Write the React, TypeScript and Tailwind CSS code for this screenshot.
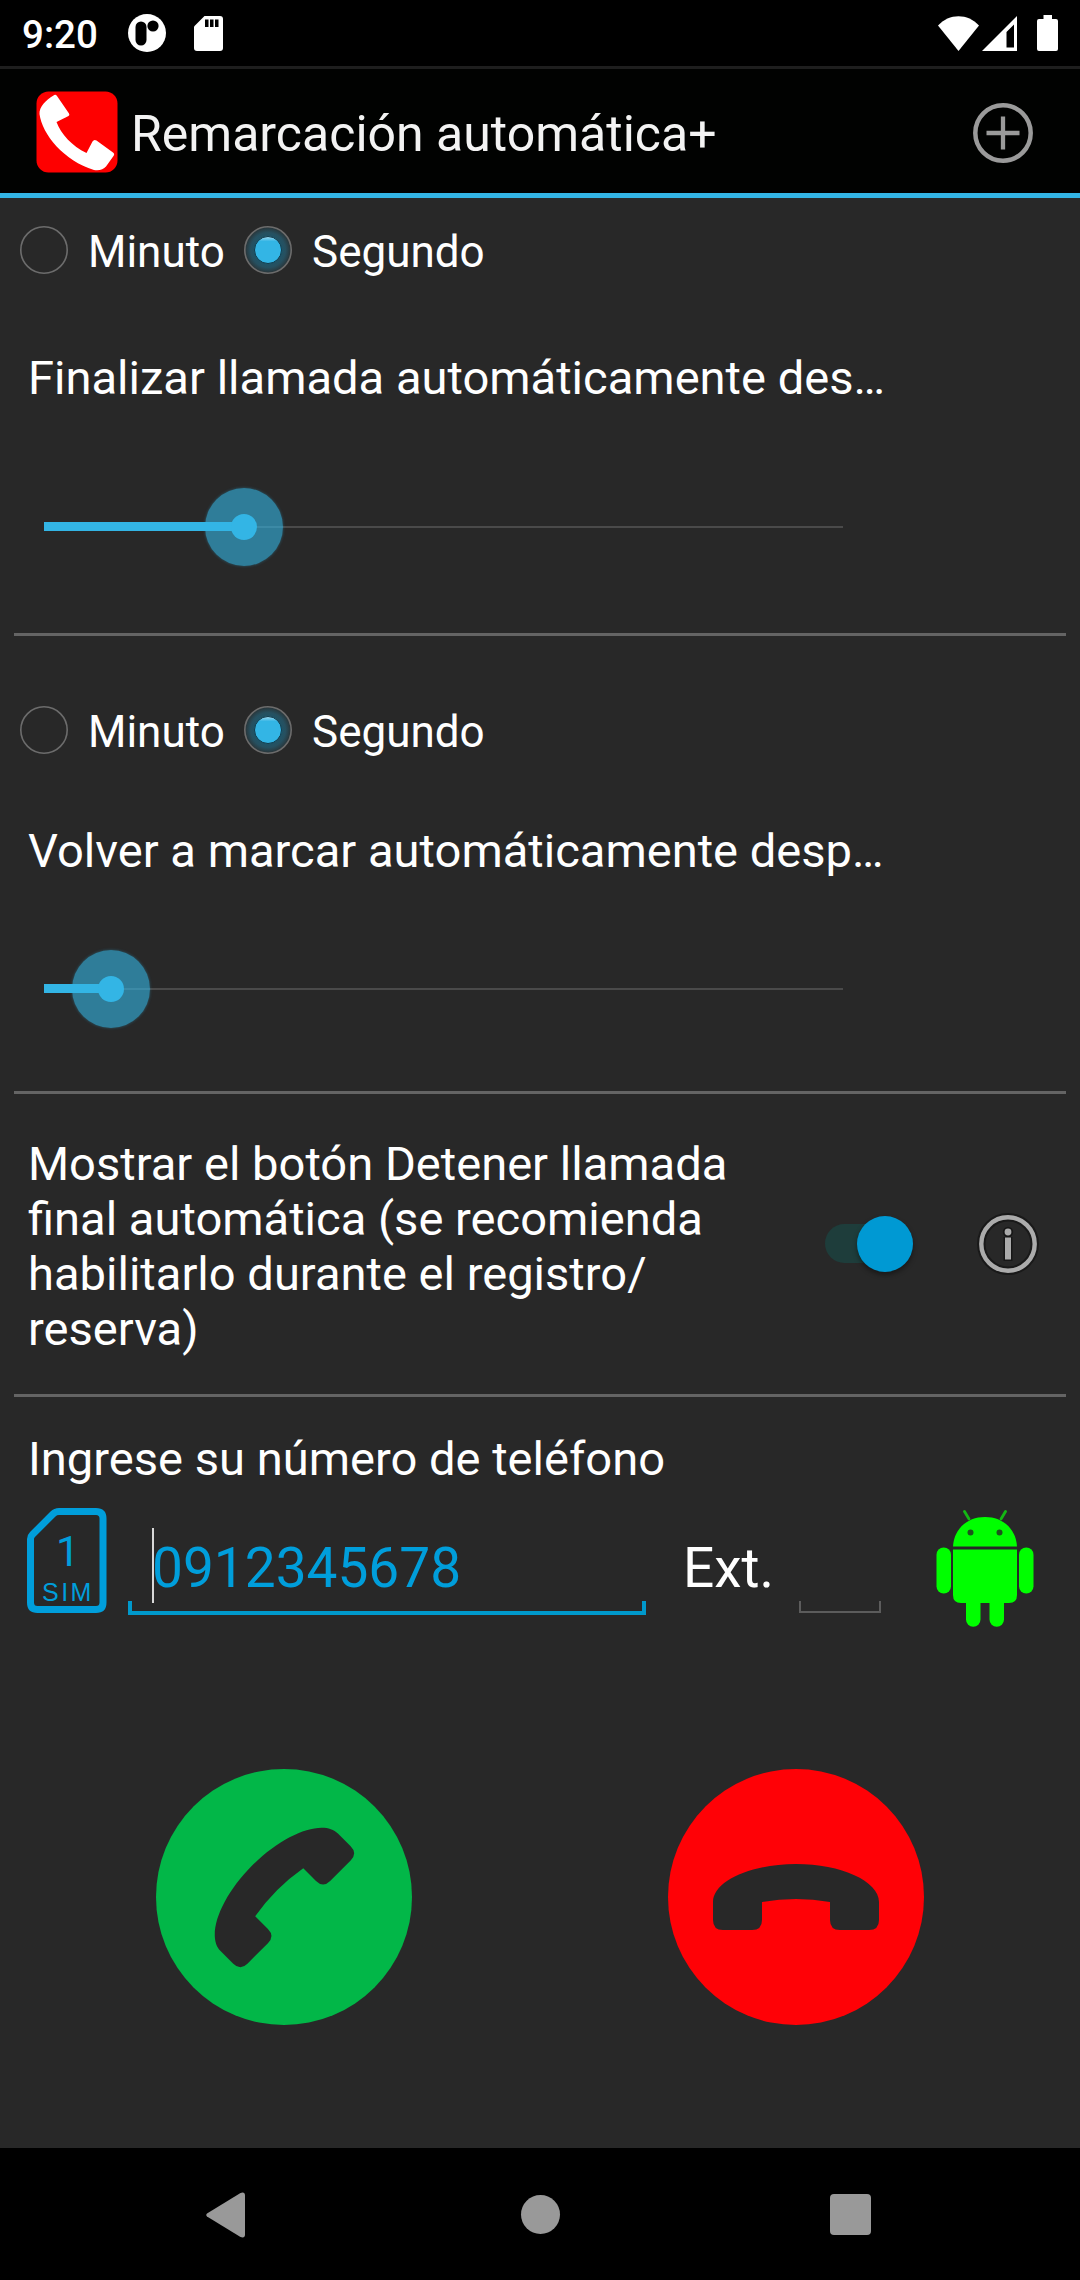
import React from "react";

function StatusBar() {
  return (
    <div className="flex h-[66px] shrink-0 items-center bg-black pl-[22px] pr-[22px]">
      <span className="mt-[3px] w-[106px] text-[38.5px] font-medium leading-[44px] text-white">9:20</span>
      <svg width="38" height="38" viewBox="0 0 38 38" className="block">
        <circle cx="19" cy="19" r="19" fill="#fff" />
        <rect x="7.5" y="7.5" width="11" height="24" rx="5.5" fill="#000" />
        <circle cx="25" cy="12" r="5.6" fill="#000" />
      </svg>
      <svg width="29" height="35" viewBox="0 0 29 35" className="ml-[28px] block">
        <path d="M10.5 0H26a3 3 0 0 1 3 3V32a3 3 0 0 1-3 3H3a3 3 0 0 1-3-3V10.500Z" fill="#fff" />
        <path d="M11 3.500h3.500V11H11ZM16 3.500h3.500V11H16ZM21 3.500h3.500V11H21Z" fill="#000" />
      </svg>
      <div className="flex-1" />
      <svg width="41" height="35" viewBox="0 0 41 35" className="block">
        <path d="M0 9.500C11-3 30-3 41 9.500L20.500 35Z" fill="#fff" />
      </svg>
      <svg width="35" height="35" viewBox="0 0 35 35" className="ml-[3px] block">
        <path d="M35 0V35H0ZM32 8.500L24.500 16V31.500H32Z" fill="#fff" fillRule="evenodd" />
      </svg>
      <svg width="21" height="36" viewBox="0 0 21 36" className="ml-[20px] block">
        <path d="M6.500 0h8.500v4H19a2 2 0 0 1 2 2V34a2 2 0 0 1-2 2H2a2 2 0 0 1-2-2V6a2 2 0 0 1 2-2H6.500Z" fill="#fff" />
      </svg>
    </div>
  );
}

function TitleBar() {
  return (
    <header className="flex h-[132px] shrink-0 items-center border-b-[5px] border-t-[3px] border-b-[#33b5e5] border-t-[#1e1e1e] bg-[#010201] pl-[36px] pr-[46px]">
      <svg width="82" height="82" viewBox="0 0 82 82" className="mt-[2px] block">
        <rect x="0.500" y="0.500" width="81" height="81" rx="12" fill="#fe0000" />
        <path
          d="M17.500 4.500Q19.500 3 21 5L33 22.500Q34 24 32.500 25L20.500 31C25 43 36 55 50.500 62L56.500 50.500Q58 48 60.500 49.500L77 61.500Q79 63 77.500 65L70 75.500C67.500 78.500 63 80 58 79C28 70 6 43 3.500 23C3 16 10 9 17.500 4.500Z"
          fill="#fff"
        />
      </svg>
      <h1 className="ml-[13px] mt-[6px] flex-1 text-[50px] font-normal leading-[58px] text-[#f3f3f3]">Remarcación automática+</h1>
      <svg width="62" height="62" viewBox="0 0 62 62" className="mt-[3px] block">
        <circle cx="31" cy="31" r="27.700" fill="none" stroke="#9a9a9a" strokeWidth="4.500" />
        <path d="M31 14.500V47.500M14.500 31H47.500" stroke="#9a9a9a" strokeWidth="4.300" />
      </svg>
    </header>
  );
}

function Radio({ checked }: { checked?: boolean }) {
  return (
    <svg width="50" height="50" viewBox="0 0 50 50" className="block">
      <defs>
        <radialGradient id="glow">
          <stop offset="0.5" stopColor="#1d5569" />
          <stop offset="0.75" stopColor="#265060" />
          <stop offset="1" stopColor="#2a3336" />
        </radialGradient>
        <linearGradient id="shine" x1="0" y1="0" x2="0" y2="1">
          <stop offset="0" stopColor="#a5dcf2" />
          <stop offset="0.18" stopColor="#33b5e5" />
        </linearGradient>
      </defs>
      <circle cx="25" cy="25" r="23.200" fill={checked ? "url(#glow)" : "none"} stroke="#6c6c6c" strokeWidth="1.600" />
      {checked && <circle cx="25" cy="25" r="13.500" fill="url(#shine)" stroke="#123a4a" strokeWidth="1" />}
    </svg>
  );
}

function UnitPicker() {
  return (
    <div className="flex h-[60px] items-center pl-[19px] text-[44px] leading-[52px] text-white">
      <Radio />
      <span className="ml-[19px] mt-[4px] w-[155px]">Minuto</span>
      <Radio checked />
      <span className="ml-[19px] mt-[4px]">Segundo</span>
    </div>
  );
}

function Slider({ value }: { value: number }) {
  return (
    <div className="relative ml-[44px] flex h-[80px] w-[799px] items-center">
      <div className="h-[2px] w-full bg-[#4a4a4a]" />
      <div className="absolute top-0 mt-[1px] size-[78px] -translate-x-1/2 rounded-full bg-[#33b5e5]/60 shadow-[0_0_3px_#33b5e560]" style={{ left: value }} />
      <div className="absolute left-0 top-[35px] h-[9px] bg-[#33b5e5]" style={{ width: value }} />
      <div className="absolute top-[27px] size-[26px] -translate-x-1/2 rounded-full bg-[#33b5e5]" style={{ left: value }} />
    </div>
  );
}

function Divider() {
  return <div className="mx-[14px] h-[3px] shrink-0 bg-[#646464]" />;
}

function StopButtonSetting() {
  return (
    <section className="flex h-[300px] shrink-0 items-center">
      <p className="ml-[28px] mt-[3px] w-[797px] text-[47.1px] leading-[55px] text-white">
        Mostrar el botón Detener llamada
        <br />
        final automática (se recomienda
        <br />
        habilitarlo durante el registro/
        <br />
        reserva)
      </p>
      <div className="relative -mt-[2px] h-[39px] w-[80px] rounded-full bg-[#1e3d3b]">
        <div className="absolute -top-[8px] left-[32px] size-[56px] rounded-full bg-[#0099d3] shadow-[0_3px_5px_rgba(0,0,0,0.4)]" />
      </div>
      <svg width="66" height="66" viewBox="0 0 66 66" className="ml-[70px] block">
        <circle cx="33" cy="33" r="26.700" fill="none" stroke="#191919" strokeWidth="8.500" />
        <circle cx="33" cy="33" r="26.700" fill="none" stroke="#ababab" strokeWidth="4.400" />
        <path d="M33 26V50" stroke="#171717" strokeWidth="9" />
        <circle cx="33" cy="21" r="5.200" fill="#171717" />
        <path d="M33 26.500V48.500" stroke="#ababab" strokeWidth="6" />
        <circle cx="33" cy="21" r="3.400" fill="#ababab" />
      </svg>
    </section>
  );
}

function SimIcon() {
  return (
    <svg width="80" height="106" viewBox="0 0 80 106" className="block">
      <path d="M32 3.500H69Q76 3.500 76 10.500V94.500Q76 101.500 69 101.500H10.500Q3.500 101.500 3.500 94.500V31Q3.500 28.500 5.500 26.500L26 6Q28.500 3.500 32 3.500Z" fill="none" stroke="#009edb" strokeWidth="7" />
      <text x="29" y="57.500" fontFamily="Roboto, sans-serif" fontSize="42" fill="#009edb">1</text>
      <text x="15" y="93" fontFamily="Liberation Sans, Arial, sans-serif" fontSize="25" letterSpacing="2.500" fill="#009edb">SIM</text>
    </svg>
  );
}

function AndroidRobot() {
  return (
    <svg width="98" height="118" viewBox="0 0 98 118" className="block">
      <g fill="#00ff00">
        <path d="M17 36.500C18 19 31 7 49 7S80 19 81 36.500Z" />
        <path d="M17 39.500H81V85Q81 93 73 93H68V109.500a7 7 0 0 1-14.500 0V93H44.500V109.500a7 7 0 0 1-14.500 0V93H25Q17 93 17 85Z" />
        <rect x="0.500" y="37.500" width="14.500" height="46" rx="7.200" />
        <rect x="83" y="37.500" width="14.500" height="46" rx="7.200" />
      </g>
      <path d="M28.500 1.500L33 9M69.500 1.500L65 9" stroke="#14b814" strokeWidth="2.800" strokeLinecap="round" />
      <circle cx="34.500" cy="22.500" r="3" fill="#1c541c" />
      <circle cx="63.500" cy="22.500" r="3" fill="#1c541c" />
    </svg>
  );
}

function PhoneRow() {
  return (
    <div className="flex h-[120px] items-start">
      <div className="ml-[27px]">
        <SimIcon />
      </div>
      <div className="relative ml-[21px] h-[107px] w-[518px]">
        <div className="ml-[24px] mt-[20px] h-[75px] border-l-2 border-[#d8d8d8] text-[55px] leading-[80px] text-[#009edb]">
          <span className="-ml-[2px] block">0912345678</span>
        </div>
        <div className="absolute bottom-0 left-0 h-[14px] w-full border-x-4 border-b-4 border-[#0099cc]" />
      </div>
      <span className="ml-[37px] mt-[20px] w-[116px] text-[55px] leading-[80px] text-white">Ext.</span>
      <div className="mt-[93px] h-[12px] w-[82px] border-x-2 border-b-2 border-[#5c5c5c]" />
      <div className="ml-[55px] mt-[2px]">
        <AndroidRobot />
      </div>
    </div>
  );
}

function Handset() {
  return (
    <path
      d="M45 133C45 112 83 95 128 95S211 112 211 133V151Q211 161 201 161H172Q162 161 162 151V133Q128 127 94 133V151Q94 161 84 161H55Q45 161 45 151Z"
      fill="#282828"
    />
  );
}

function CallButtons() {
  return (
    <div className="flex gap-[256px] pl-[156px]">
      <button aria-label="Llamar">
        <svg width="256" height="256" viewBox="0 0 256 256" className="block">
          <circle cx="128" cy="128" r="128" fill="#02b748" />
          <g transform="translate(-8.300 -8.300) rotate(-45 128 128)">
            <Handset />
          </g>
        </svg>
      </button>
      <button aria-label="Colgar">
        <svg width="256" height="256" viewBox="0 0 256 256" className="block">
          <circle cx="128" cy="128" r="128" fill="#ff0106" />
          <Handset />
        </svg>
      </button>
    </div>
  );
}

function NavBar() {
  return (
    <nav className="flex h-[132px] shrink-0 items-center bg-black pl-[206px] pt-px">
      <svg width="40" height="46" viewBox="0 0 40 46" className="block">
        <path d="M1 21.500L34.500 1Q39 -0.500 39 3.500V42.500Q39 46.500 34.500 45L1 24.500Q-0.500 23 1 21.500Z" fill="#999" />
      </svg>
      <div className="ml-[275px] size-[39px] rounded-full bg-[#999]" />
      <div className="ml-[270px] size-[41px] rounded-[4px] bg-[#999]" />
    </nav>
  );
}

export default function App() {
  return (
    <div className="flex h-[2280px] w-[1080px] flex-col overflow-hidden bg-[#282828] font-['Roboto',sans-serif]">
      <StatusBar />
      <TitleBar />
      <section className="h-[435px] shrink-0 pt-[22px]">
        <UnitPicker />
        <p className="ml-[28px] mt-[70px] h-[56px] w-[870px] truncate text-[47.1px] leading-[56px] text-white">Finalizar llamada automáticamente des…</p>
        <div className="mt-[81px]">
          <Slider value={200} />
        </div>
      </section>
      <Divider />
      <section className="h-[455px] shrink-0 pt-[64px]">
        <UnitPicker />
        <p className="ml-[28px] mt-[63px] h-[56px] w-[870px] truncate text-[47.1px] leading-[56px] text-white">Volver a marcar automáticamente desp…</p>
        <div className="mt-[70px]">
          <Slider value={67} />
        </div>
      </section>
      <Divider />
      <StopButtonSetting />
      <Divider />
      <section className="flex flex-1 flex-col">
        <p className="ml-[28px] mt-[34px] h-[56px] text-[47.1px] leading-[56px] text-white">Ingrese su número de teléfono</p>
        <div className="mt-[21px]">
          <PhoneRow />
        </div>
        <div className="mt-[141px]">
          <CallButtons />
        </div>
      </section>
      <NavBar />
    </div>
  );
}
